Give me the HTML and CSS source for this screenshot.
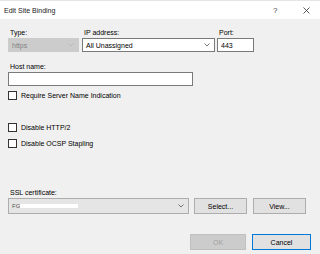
FILE: index.html
```html
<!DOCTYPE html>
<html lang="en">
<head>
    <meta charset="UTF-8">
    <title>Edit Site Binding</title>
    <link rel="stylesheet" href="styles.css">
</head>
<body>
    <div class="dialog">
        <!-- Title bar -->
        <div class="titlebar">
            <span class="title">Edit Site Binding</span>
            <span class="help">?</span>
            <span class="close">
                <svg width="7" height="7" viewBox="0 0 7 7"><path d="M0.5 0.5L6.5 6.5M6.5 0.5L0.5 6.5" stroke="#333" stroke-width="0.8" fill="none"/></svg>
            </span>
        </div>

        <div class="content">
            <!-- Type / IP / Port -->
            <div class="row binding-row">
                <div class="field type-field">
                    <label>Type:</label>
                    <div class="combo disabled">
                        <span class="combo-text">https</span>
                        <svg class="chevron" width="6" height="4" viewBox="0 0 6 4"><path d="M0.5 0.5L3 3L5.5 0.5" stroke="#b4b4b4" stroke-width="0.8" fill="none"/></svg>
                    </div>
                </div>
                <div class="field ip-field">
                    <label>IP address:</label>
                    <div class="combo">
                        <span class="combo-text">All Unassigned</span>
                        <svg class="chevron" width="6" height="4" viewBox="0 0 6 4"><path d="M0.5 0.5L3 3L5.5 0.5" stroke="#555" stroke-width="0.8" fill="none"/></svg>
                    </div>
                </div>
                <div class="field port-field">
                    <label>Port:</label>
                    <div class="textbox">443</div>
                </div>
            </div>

            <!-- Host name -->
            <div class="field host-field">
                <label>Host name:</label>
                <div class="textbox"></div>
            </div>

            <div class="check sni"><span class="box"></span>Require Server Name Indication</div>
            <div class="check http2"><span class="box"></span>Disable HTTP/2</div>
            <div class="check ocsp"><span class="box"></span>Disable OCSP Stapling</div>

            <!-- SSL certificate -->
            <div class="field ssl-field">
                <label>SSL certificate:</label>
                <div class="ssl-row">
                    <div class="combo cert">
                        <span class="combo-text">FG</span>
                        <span class="redacted"></span>
                        <svg class="chevron" width="6" height="4" viewBox="0 0 6 4"><path d="M0.5 0.5L3 3L5.5 0.5" stroke="#555" stroke-width="0.8" fill="none"/></svg>
                    </div>
                    <button class="btn select-btn">Select...</button>
                    <button class="btn view-btn">View...</button>
                </div>
            </div>

            <!-- Footer -->
            <div class="footer">
                <button class="btn ok-btn" disabled>OK</button>
                <button class="btn cancel-btn">Cancel</button>
            </div>
        </div>
    </div>
</body>
</html>
```

FILE: styles.css
```css
/* Dialog */
body {
    margin: 0;
    padding: 0;
    font-family: 'Liberation Sans', Arial, sans-serif;
    font-size: 7px;
    color: #000;
    background: #f0f0f0;
}

.dialog {
    width: 320px;
    height: 254px;
    background: #f0f0f0;
    overflow: hidden;
}

.titlebar {
    display: flex;
    align-items: center;
    height: 19px;
    background: #fff;
    border-top: 1px solid #e6e6e6;
    box-sizing: border-box;
}

.title {
    padding-left: 4px;
    flex: 1;
    color: #222;
}

.help {
    width: 10px;
    color: #444;
    font-size: 8px;
    margin-right: 20px;
}

.close {
    display: flex;
    margin-right: 10px;
}

.content {
    padding-left: 8px;
}

/* Fields */
.row {
    display: flex;
}

.binding-row {
    margin-top: 9px;
}

label {
    display: block;
    height: 9px;
    line-height: 9px;
    padding-left: 2px;
    margin-bottom: 1px;
}

.type-field { width: 71px; }
.ip-field { width: 133px; margin-left: 3px; }
.port-field { width: 37px; margin-left: 2px; }

.combo, .textbox {
    display: flex;
    align-items: center;
    height: 14px;
    box-sizing: border-box;
    border: 1px solid #7a7a7a;
    background: #fff;
    padding-left: 3px;
}

.combo-text {
    flex: 1;
    white-space: nowrap;
}

.chevron {
    margin-right: 4px;
}

.combo.disabled {
    background: #cccccc;
    border-color: #cccccc;
    color: #838383;
}

.host-field {
    width: 185px;
    margin-top: 10px;
}

/* Checkboxes */
.check {
    display: flex;
    align-items: center;
    height: 9px;
}

.check .box {
    width: 9px;
    height: 9px;
    box-sizing: border-box;
    border: 1px solid #333;
    background: #fff;
    margin-right: 4px;
}

.sni { margin-top: 5px; }
.http2 { margin-top: 23px; }
.ocsp { margin-top: 7px; }

/* SSL certificate */
.ssl-field {
    margin-top: 40px;
}

.ssl-row {
    display: flex;
}

.combo.cert {
    width: 181px;
    height: 16px;
    background: #e5e5e5;
    border-color: #adadad;
    position: relative;
}

.combo.cert .combo-text {
    flex: none;
    color: #555;
    font-size: 6px;
}

.redacted {
    flex: 1;
    height: 4px;
    margin: 0 100px 0 0;
    background: #fff;
}

.btn {
    height: 16px;
    box-sizing: border-box;
    border: 1px solid #adadad;
    background: #e1e1e1;
    font-family: 'Liberation Sans', Arial, sans-serif;
    font-size: 7px;
    color: #000;
    padding: 0;
}

.select-btn { width: 53px; margin-left: 5px; }
.view-btn { width: 53px; margin-left: 6px; }

.footer {
    display: flex;
    margin-top: 20px;
    padding-left: 182px;
}

.ok-btn {
    width: 56px;
    background: #cccccc;
    border-color: #bfbfbf;
    color: #a0a0a0;
}

.cancel-btn {
    width: 59px;
    margin-left: 6px;
    border-color: #0078d7;
}
```
